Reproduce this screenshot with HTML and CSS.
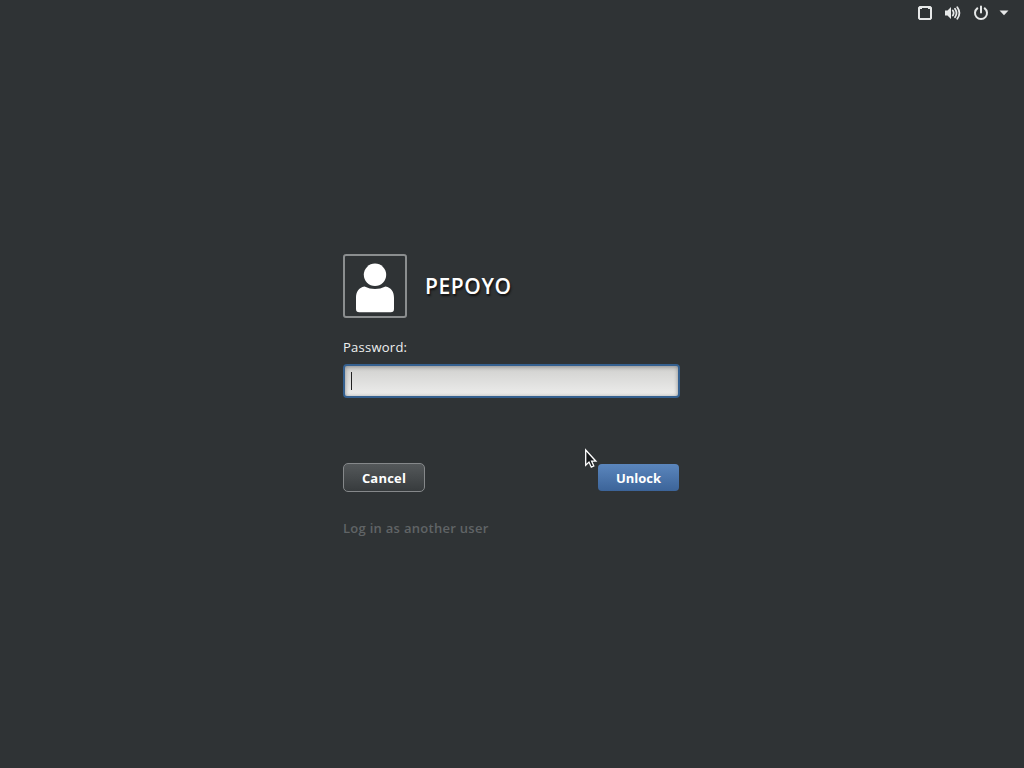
FILE: index.html
```
<!DOCTYPE html>
<html lang="en">
<head>
    <meta charset="UTF-8">
    <meta name="viewport" content="width=device-width, initial-scale=1.0">
    <title>Unlock</title>
    <link rel="stylesheet" href="styles.css">
</head>
<body>
    <header class="panel">
        <svg class="icon-network" width="16" height="16" viewBox="0 0 16 16">
            <path fill="#e6e8e8" fill-rule="evenodd" d="M2.500 1h11L15 2.500v11L13.500 15h-11L1 13.500V2.500zM5 3v1H3v9h10V4h-2V3z"/>
        </svg>
        <svg class="icon-volume" width="18" height="16" viewBox="0 0 18 16">
            <path fill="#e6e8e8" d="M1 5.500h2.500L7 2v12l-3.500-3.500H1z"/>
            <path fill="none" stroke="#e6e8e8" stroke-width="1.800" stroke-linecap="round" d="M8.800 5.500q1.700 2.500 0 5M11 3.700q3 4.300 0 8.600M13.300 2.200q4.200 5.800 0 11.600"/>
        </svg>
        <svg class="icon-power" width="16" height="16" viewBox="0 0 16 16">
            <path fill="none" stroke="#e6e8e8" stroke-width="2" stroke-linecap="round" d="M8 1.500v6M4.300 3.400a6 6 0 1 0 7.400 0"/>
        </svg>
        <svg class="icon-arrow" width="10" height="6" viewBox="0 0 10 6">
            <path fill="#e6e8e8" d="M.5.500h9L5 5.200z"/>
        </svg>
    </header>

    <main class="dialog">
        <div class="user">
            <div class="avatar">
                <svg width="60" height="60" viewBox="0 0 60 60">
                    <circle cx="30" cy="18.800" r="11.200" fill="#fff"/>
                    <path fill="#fff" d="M19.500 30.500q10.500 5 21 0C46.500 31.500 49 36 49 42v11q0 3.300-3.300 3.300H14.300Q11 56.300 11 53V42c0-6 2.500-10.500 8.500-11.500z"/>
                </svg>
            </div>
            <h1 class="username">PEPOYO</h1>
        </div>

        <div class="label">Password:</div>
        <div class="entry"><span class="caret"></span></div>

        <div class="buttons">
            <button class="button cancel"><span>Cancel</span></button>
            <button class="button unlock"><span>Unlock</span></button>
        </div>

        <div class="other-user"><span>Log in as another user</span></div>
    </main>

    <svg class="pointer" width="14" height="22" viewBox="0 0 14 22">
        <path fill="#15181a" stroke="#fff" stroke-width="1.300" d="M1.700 2v15.200l3.300-3.200 2.300 5.200 2.500-1.200-2.200-4.800h4.300z"/>
    </svg>
</body>
</html>
```

FILE: styles.css
```
body {
    margin: 0;
    height: 768px;
    overflow: hidden;
    background-color: #2f3335;
    color: #eef0f0;
    font-family: "Open Sans", "Noto Sans", sans-serif;
}

.panel {
    display: flex;
    justify-content: flex-end;
    align-items: center;
    height: 26px;
    padding-right: 15px;
}
.icon-volume {
    margin-left: 11px;
}
.icon-power {
    margin-left: 11px;
}
.icon-arrow {
    margin-left: 10px;
}

.dialog {
    width: 337px;
    margin: 228px 0 0 343px;
}

.user {
    display: flex;
    align-items: center;
    gap: 18px;
}
.avatar {
    width: 60px;
    height: 60px;
    border: 2px solid #8b8e8f;
    border-radius: 3px;
}
.avatar svg {
    display: block;
}
.username {
    margin: 0;
    font-size: 21px;
    font-weight: 600;
    letter-spacing: 0.6px;
    color: #fff;
    text-shadow: 1px 2px 2px #111;
}

.label {
    margin-top: 19px;
    height: 20px;
    line-height: 20px;
    font-size: 13px;
    letter-spacing: 0.25px;
}

.entry {
    box-sizing: border-box;
    height: 34px;
    margin-top: 7px;
    padding: 6px;
    border: 2px solid #35608f;
    border-radius: 4px;
    background: linear-gradient(#d0d0ce, #ededec);
    box-shadow: inset 0 1px 4px #8b8b8b;
}
.caret {
    display: block;
    width: 1px;
    height: 18px;
    background-color: #222;
}

.buttons {
    display: flex;
    justify-content: space-between;
    align-items: center;
    margin-top: 65px;
    padding-right: 1px;
}
.button {
    box-sizing: border-box;
    padding: 0;
    border: none;
    border-radius: 4px;
    font-family: inherit;
    font-size: 13px;
    font-weight: bold;
    color: #fff;
}
.cancel {
    width: 82px;
    height: 29px;
    border: 1px solid #85888a;
    border-radius: 5px;
    background: linear-gradient(#54585a, #373b3d);
    letter-spacing: 0.2px;
}
.unlock {
    width: 81px;
    height: 27px;
    background: linear-gradient(#5b86bd, #3c6499);
}

.other-user {
    margin-top: 26px;
    line-height: 20px;
    font-size: 13px;
    font-weight: 600;
    letter-spacing: 0.28px;
    color: #606466;
}

.pointer {
    position: absolute;
    left: 584px;
    top: 448px;
}
```
